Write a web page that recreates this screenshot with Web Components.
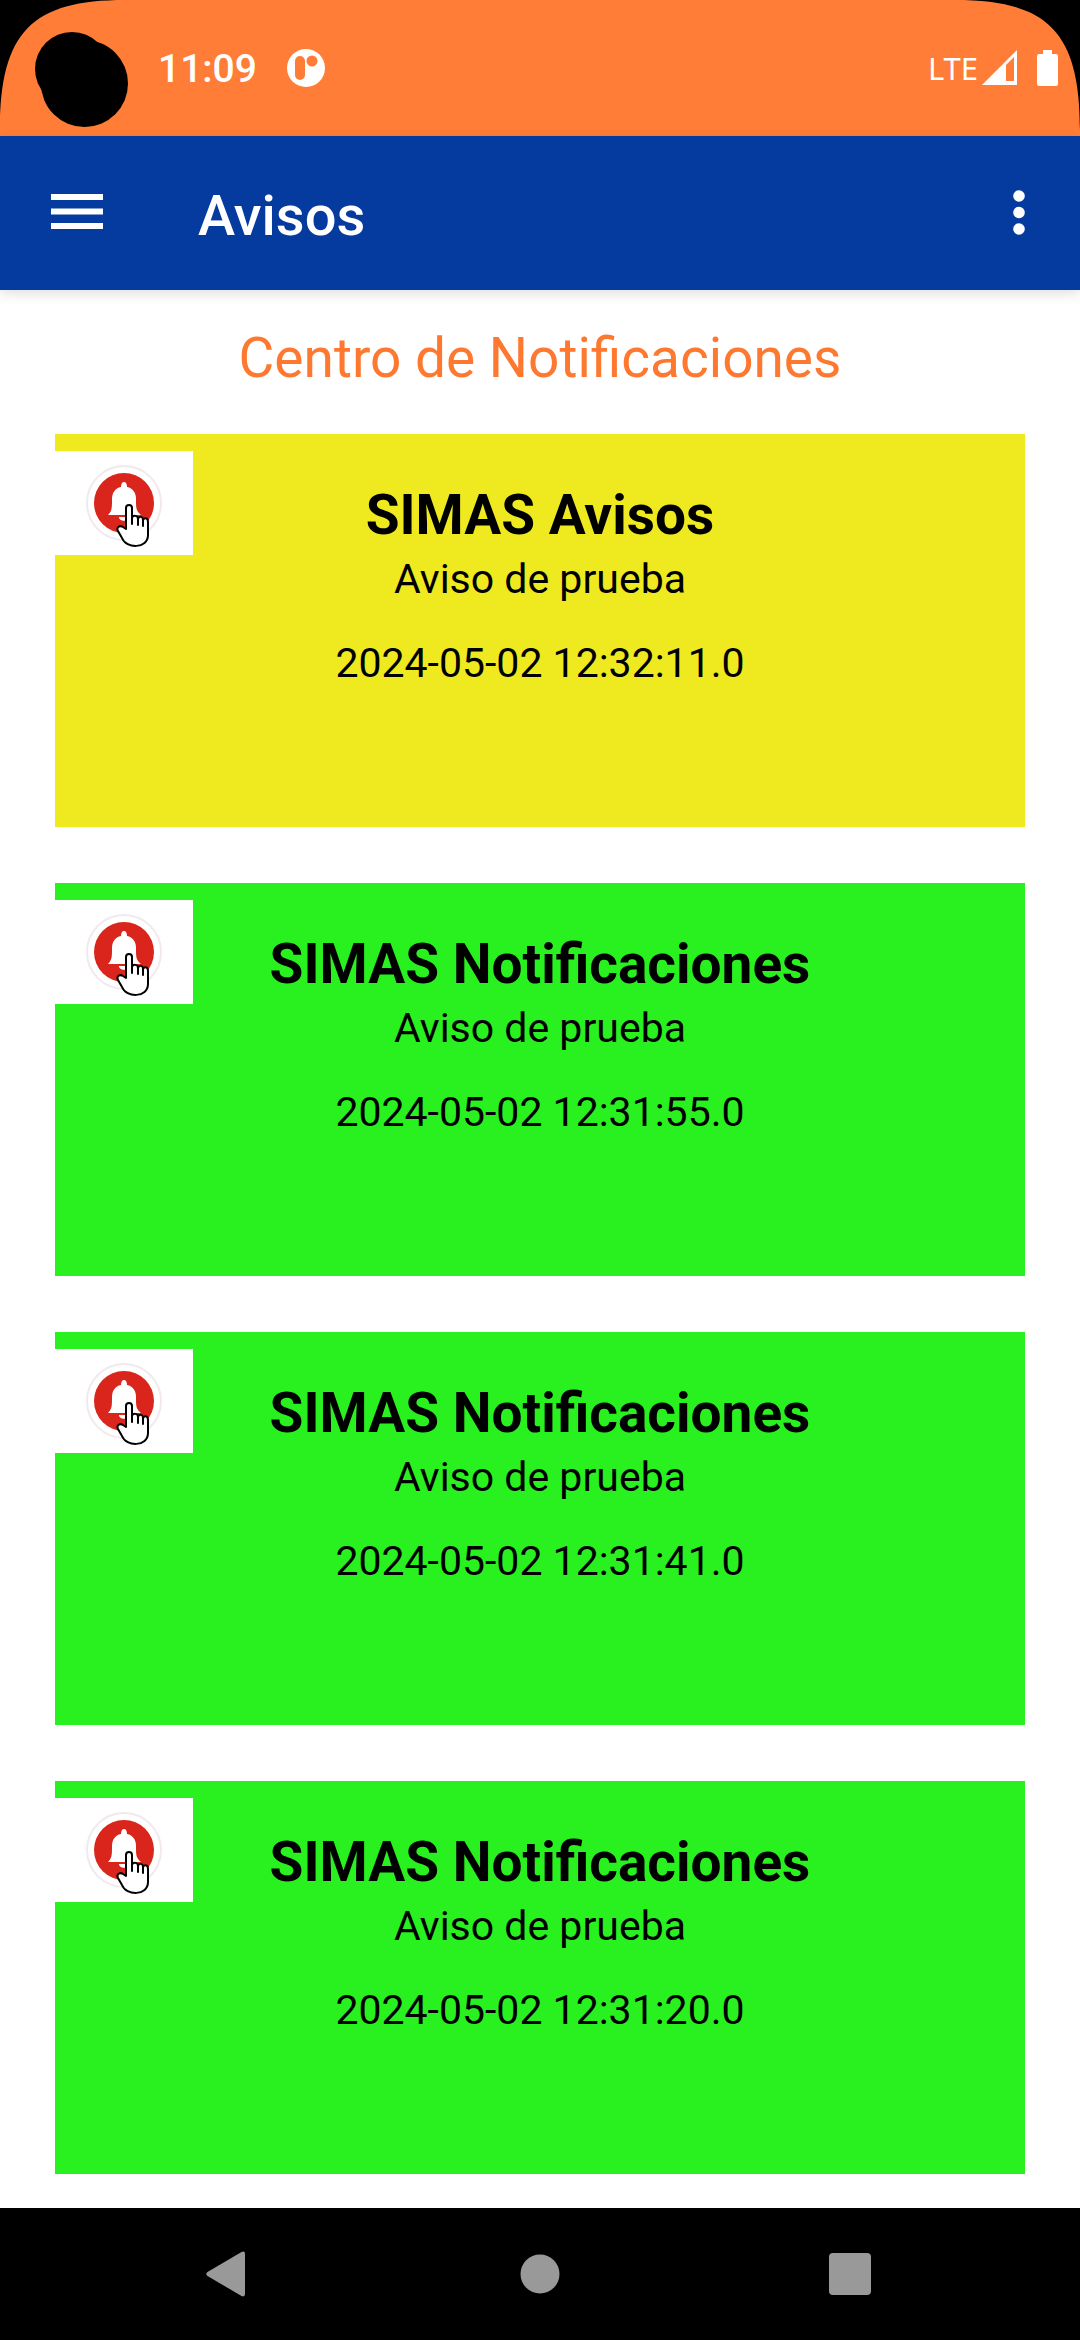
<!DOCTYPE html>
<html lang="es">
<head>
<meta charset="UTF-8">
<meta name="viewport" content="width=device-width, initial-scale=1.0">
<title>Avisos</title>
<style>
    :root {
        --status-color: #ff7d36;
        --primary-color: #053b9e;
        --accent-color: #ff7830;
        --warning-color: #efea20;
        --info-color: #29f120;
    }

    body {
        margin: 0;
        background: #fff;
        font-family: Roboto, "Liberation Sans", sans-serif;
    }
</style>
</head>
<body>
<app-screen>
    <status-bar slot="status" time="11:09" network="LTE"></status-bar>
    <app-toolbar slot="toolbar">Avisos</app-toolbar>
    <notification-list heading="Centro de Notificaciones">
        <notification-card kind="warning">
            <span slot="title">SIMAS Avisos</span>
            <span slot="message">Aviso de prueba</span>
            <span slot="date">2024-05-02 12:32:11.0</span>
        </notification-card>
        <notification-card>
            <span slot="title">SIMAS Notificaciones</span>
            <span slot="message">Aviso de prueba</span>
            <span slot="date">2024-05-02 12:31:55.0</span>
        </notification-card>
        <notification-card>
            <span slot="title">SIMAS Notificaciones</span>
            <span slot="message">Aviso de prueba</span>
            <span slot="date">2024-05-02 12:31:41.0</span>
        </notification-card>
        <notification-card>
            <span slot="title">SIMAS Notificaciones</span>
            <span slot="message">Aviso de prueba</span>
            <span slot="date">2024-05-02 12:31:20.0</span>
        </notification-card>
    </notification-list>
    <nav-bar slot="nav"></nav-bar>
</app-screen>

<script>
class AppScreen extends HTMLElement {
    constructor() {
        super();
        this.attachShadow({ mode: 'open' });
        this.shadowRoot.innerHTML = `
            <style>
                :host {
                    display: flex;
                    flex-direction: column;
                    min-height: 100vh;
                }

                main {
                    flex: 1;
                }
            </style>
            <slot name="status"></slot>
            <slot name="toolbar"></slot>
            <main><slot></slot></main>
            <slot name="nav"></slot>
        `;
    }
}

class StatusBar extends HTMLElement {
    constructor() {
        super();
        this.attachShadow({ mode: 'open' });
        this.shadowRoot.innerHTML = `
            <style>
                :host {
                    display: flex;
                    align-items: center;
                    justify-content: space-between;
                    position: relative;
                    box-sizing: border-box;
                    height: 136px;
                    padding: 0 20px 0 158px;
                    background: var(--status-color);
                    color: #fff;
                }

                svg {
                    display: block;
                }

                .corner,
                .camera {
                    position: absolute;
                    top: 0;
                    left: 0;
                }

                .corner.right {
                    left: auto;
                    right: 0;
                    transform: scaleX(-1);
                }

                .group {
                    display: flex;
                    align-items: center;
                }

                .time {
                    padding-top: 2px;
                    font-size: 39px;
                    font-weight: 500;
                    line-height: 48px;
                    margin-right: 30px;
                }

                .network {
                    font-family: "Noto Sans", sans-serif;
                    font-size: 31px;
                    line-height: 48px;
                    margin-right: 4px;
                }

                .signal {
                    margin-right: 18px;
                }
            </style>
            <svg class="corner" width="130" height="136" viewBox="0 0 130 136" aria-hidden="true">
                <path d="M0 0H125C32 0 0 32 0 130Z"/>
            </svg>
            <svg class="corner right" width="130" height="136" viewBox="0 0 130 136" aria-hidden="true">
                <path d="M0 0H125C32 0 0 32 0 130Z"/>
            </svg>
            <svg class="camera" width="130" height="136" viewBox="0 0 130 136" aria-hidden="true">
                <circle cx="72" cy="69" r="37"/>
                <circle cx="84.500" cy="83.500" r="43.500"/>
            </svg>
            <div class="group">
                <span class="time"></span>
                <svg width="38" height="38" viewBox="0 0 38 38" aria-hidden="true">
                    <circle cx="19" cy="19" r="19" fill="#fff"/>
                    <rect x="8" y="7" width="10" height="24" rx="5" fill="#ff7d36"/>
                    <circle cx="25" cy="12" r="5.500" fill="#ff7d36"/>
                </svg>
            </div>
            <div class="group">
                <span class="network"></span>
                <svg class="signal" width="36" height="36" viewBox="0 0 36 36" fill="#fff" fill-rule="evenodd" aria-hidden="true">
                    <path d="M0 35L35 0V35ZM24 15V31H32V7Z"/>
                </svg>
                <svg width="24" height="36" viewBox="0 0 24 36" fill="#fff" aria-hidden="true">
                    <path d="M7 0H16V4H20Q22 4 22 6V34Q22 36 20 36H3Q1 36 1 34V6Q1 4 3 4H7Z"/>
                </svg>
            </div>
        `;
    }

    connectedCallback() {
        this.shadowRoot.querySelector('.time').textContent = this.getAttribute('time');
        this.shadowRoot.querySelector('.network').textContent = this.getAttribute('network');
    }
}

class AppToolbar extends HTMLElement {
    constructor() {
        super();
        this.attachShadow({ mode: 'open' });
        this.shadowRoot.innerHTML = `
            <style>
                :host {
                    display: block;
                    position: relative;
                    z-index: 1;
                    background: var(--primary-color);
                    color: #fff;
                    box-shadow: 0 4px 12px rgba(0, 0, 0, 0.12);
                }

                header {
                    display: flex;
                    align-items: center;
                    height: 154px;
                    padding: 0 16px 0 32px;
                }

                button {
                    display: flex;
                    align-items: center;
                    justify-content: center;
                    width: 90px;
                    height: 90px;
                    padding: 0;
                    border: 0;
                    background: none;
                    color: inherit;
                }

                h1 {
                    flex: 1;
                    margin: 0;
                    padding: 6px 0 0 76px;
                    font-size: 56px;
                    font-weight: 500;
                    line-height: 64px;
                }
            </style>
            <header>
                <button type="button" aria-label="Abrir menú">
                    <svg width="52" height="38" viewBox="0 0 52 38" fill="currentColor">
                        <path d="M0 0H52V6H0ZM0 14.500H52V20.500H0ZM0 29H52V35H0Z"/>
                    </svg>
                </button>
                <h1><slot></slot></h1>
                <button type="button" aria-label="Más opciones">
                    <svg width="12" height="46" viewBox="0 0 12 46" fill="currentColor">
                        <circle cx="6" cy="6" r="5.800"/>
                        <circle cx="6" cy="22.500" r="5.800"/>
                        <circle cx="6" cy="39" r="5.800"/>
                    </svg>
                </button>
            </header>
        `;
    }
}

class NotificationList extends HTMLElement {
    constructor() {
        super();
        this.attachShadow({ mode: 'open' });
        this.shadowRoot.innerHTML = `
            <style>
                :host {
                    display: block;
                    padding: 36px 55px 34px;
                }

                h2 {
                    margin: 0 0 44px;
                    color: var(--accent-color);
                    font-size: 55px;
                    font-weight: 400;
                    line-height: 64px;
                    text-align: center;
                }

                .list {
                    display: flex;
                    flex-direction: column;
                    gap: 56px;
                }
            </style>
            <h2></h2>
            <div class="list"><slot></slot></div>
        `;
    }

    connectedCallback() {
        this.shadowRoot.querySelector('h2').textContent = this.getAttribute('heading');
    }
}

class BellIcon extends HTMLElement {
    constructor() {
        super();
        this.attachShadow({ mode: 'open' });
        this.shadowRoot.innerHTML = `
            <style>
                :host {
                    display: block;
                    width: 138px;
                    height: 104px;
                    background: #fff;
                }

                svg {
                    display: block;
                }
            </style>
            <svg width="138" height="104" viewBox="0 0 138 104" aria-hidden="true">
                <circle cx="69" cy="52" r="37" fill="#fff" stroke="#f1e9ee" stroke-width="2"/>
                <circle cx="69" cy="52" r="30" fill="#da251c"/>
                <path fill="#fff" d="M69 31C71 31 72 33 72 36C78 37 81 42 81 48C81 57 81 60 86 64H53C57 60 57 57 57 48C57 42 60 37 66 36C66 33 67 31 69 31ZM64 66H74C74 71 64 71 64 66Z"/>
                <path fill="#fff" stroke="#000" stroke-width="2" stroke-linejoin="round" d="M71 78V57C71 53 77 53 77 57V67C78 64 83 64 83 68C84 65 88 65 88 69C90 66 93 67 93 71V84C93 98 71 98 67 87L63 80C61 76 65 74 68 76Z"/>
                <path fill="none" stroke="#000" stroke-width="2" stroke-linecap="round" d="M77 65V73M83 67V74M88 69V75"/>
            </svg>
        `;
    }
}

class NotificationCard extends HTMLElement {
    constructor() {
        super();
        this.attachShadow({ mode: 'open' });
        this.shadowRoot.innerHTML = `
            <style>
                :host {
                    display: block;
                    background: var(--info-color);
                    color: #000;
                }

                :host([kind="warning"]) {
                    background: var(--warning-color);
                }

                article {
                    display: grid;
                    grid-template-columns: 138px 1fr 138px;
                    align-items: start;
                    min-height: 376px;
                    padding-top: 17px;
                }

                .content {
                    padding-top: 32px;
                    text-align: center;
                }

                h3,
                p {
                    margin: 0;
                }

                h3 {
                    font-size: 55px;
                    font-weight: 700;
                    line-height: 64px;
                }

                p {
                    font-size: 41px;
                    line-height: 48px;
                }

                .message {
                    margin: 8px 0 36px;
                }
            </style>
            <article>
                <bell-icon></bell-icon>
                <div class="content">
                    <h3><slot name="title"></slot></h3>
                    <p class="message"><slot name="message"></slot></p>
                    <p><slot name="date"></slot></p>
                </div>
            </article>
        `;
    }
}

class NavBar extends HTMLElement {
    constructor() {
        super();
        this.attachShadow({ mode: 'open' });
        this.shadowRoot.innerHTML = `
            <style>
                :host {
                    display: block;
                }

                nav {
                    display: flex;
                    justify-content: center;
                    background: #000;
                }

                button {
                    display: flex;
                    align-items: center;
                    justify-content: center;
                    width: 310px;
                    height: 132px;
                    padding: 0;
                    border: 0;
                    background: none;
                    color: #999;
                }
            </style>
            <nav>
                <button type="button" aria-label="Atrás">
                    <svg width="48" height="48" viewBox="0 0 48 48" fill="currentColor">
                        <path d="M1.500 22L35.500 2Q39 0.500 39 4V44Q39 47.500 35.500 46L1.500 26Q-1 24 1.500 22Z"/>
                    </svg>
                </button>
                <button type="button" aria-label="Inicio">
                    <svg width="40" height="40" viewBox="0 0 40 40" fill="currentColor">
                        <circle cx="20" cy="20" r="19.500"/>
                    </svg>
                </button>
                <button type="button" aria-label="Recientes">
                    <svg width="42" height="42" viewBox="0 0 42 42" fill="currentColor">
                        <rect width="42" height="42" rx="4"/>
                    </svg>
                </button>
            </nav>
        `;
    }
}

customElements.define('app-screen', AppScreen);
customElements.define('status-bar', StatusBar);
customElements.define('app-toolbar', AppToolbar);
customElements.define('notification-list', NotificationList);
customElements.define('bell-icon', BellIcon);
customElements.define('notification-card', NotificationCard);
customElements.define('nav-bar', NavBar);
</script>
</body>
</html>
